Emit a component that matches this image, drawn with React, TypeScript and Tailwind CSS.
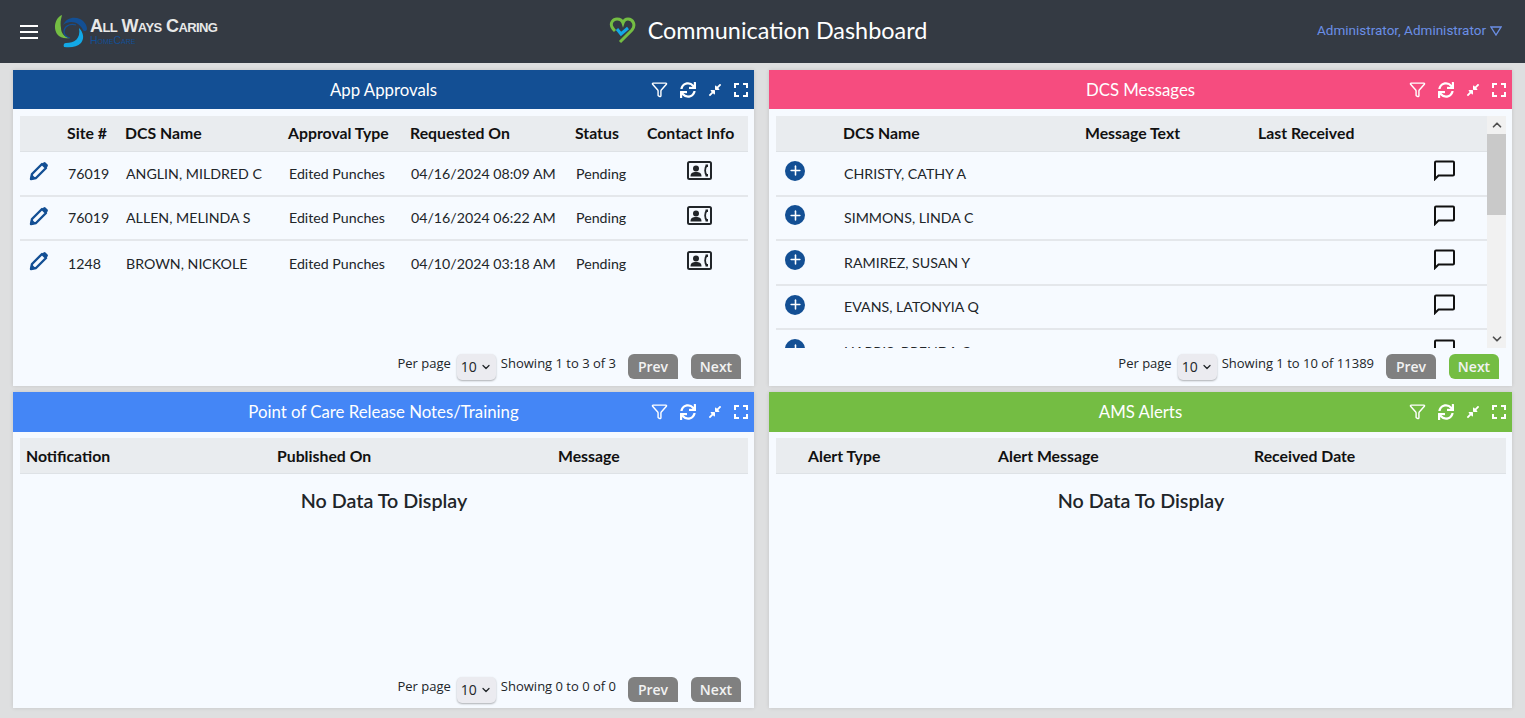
import { ReactNode } from 'react'
import { ChevronDown, ChevronUp, Filter, Plus } from 'lucide-react'
import { FaCompressAlt, FaSync } from 'react-icons/fa'

const FONT = "font-['Lato','Noto_Sans',sans-serif]"
const UI_FONT = "font-['Open_Sans',sans-serif]"

const approvals = [
    ['76019', 'ANGLIN, MILDRED C', 'Edited Punches', '04/16/2024 08:09 AM', 'Pending'],
    ['76019', 'ALLEN, MELINDA S', 'Edited Punches', '04/16/2024 06:22 AM', 'Pending'],
    ['1248', 'BROWN, NICKOLE', 'Edited Punches', '04/10/2024 03:18 AM', 'Pending'],
]

const messages = ['CHRISTY, CATHY A', 'SIMMONS, LINDA C', 'RAMIREZ, SUSAN Y', 'EVANS, LATONYIA Q', 'HARRIS, BRENDA C']

function ExpandIcon() {
    return (
        <svg className="ml-[12px]" width="14" height="14" viewBox="0 0 14 14" fill="none" stroke="white" strokeWidth="2">
            <path d="M1 5V1h4M9 1h4v4M13 9v4H9M5 13H1V9" />
        </svg>
    )
}

function PencilIcon() {
    return (
        <svg className="mb-[4px] ml-[9px]" width="20" height="20" viewBox="0 0 20 20" fill="none">
            <path d="M2 18l1-5L13 3l4 4L7 17z" stroke="#134f94" strokeWidth="2.400" strokeLinejoin="round" />
            <path d="M1 19l1.500-6 4.500 4.500z" fill="#134f94" />
            <path d="M14.500 1.500a1.500 1.500 0 0 1 2 0l2 2a1.500 1.500 0 0 1 0 2L17 7l-4-4z" fill="#134f94" />
        </svg>
    )
}

function ContactIcon() {
    return (
        <svg width="25" height="19" viewBox="0 0 25 19" fill="none">
            <rect x="1" y="1" width="23" height="17" rx="1.500" stroke="#212529" strokeWidth="2" />
            <circle cx="9" cy="7.500" r="3" fill="#212529" />
            <path d="M3.500 15.500c0-3.500 2-4.500 5.500-4.500s5.500 1 5.500 4.500z" fill="#212529" />
            <path d="M20 4.500c-2.500 2-2.500 8 0 10" stroke="#212529" strokeWidth="1.800" />
            <path d="M18.500 3.500h2.500v2.500h-2.500zM18.500 13h2.500v2.500h-2.500z" fill="#212529" />
        </svg>
    )
}

function CommentIcon() {
    return (
        <svg width="22" height="21" viewBox="0 0 22 21" fill="none" stroke="#111" strokeWidth="2">
            <path d="M2 19V2.500c0-.6.400-1 1-1h17c.6 0 1 .400 1 1v12c0 .6-.400 1-1 1H5.500z" />
        </svg>
    )
}

function PlusBadge() {
    return (
        <span className="flex h-5 w-5 items-center justify-center rounded-full bg-[#134f94]">
            <Plus size={15} color="white" strokeWidth={2.5} />
        </span>
    )
}

function Panel({ title, color, tall, children }: { title: string; color: string; tall?: boolean; children: ReactNode }) {
    return (
        <section className="flex h-[316px] flex-col bg-[#f6faff] shadow-[0_0_4px_rgba(0,0,0,0.12)]">
            <div className={`relative flex shrink-0 items-center justify-center text-[16.800px] text-white ${tall ? 'h-[40px]' : 'h-[39px]'} ${color}`}>
                <span>{title}</span>
                <div className="absolute right-[6px] top-[11px] flex items-center">
                    <Filter size={17} strokeWidth={2} />
                    <FaSync className="ml-[12px]" size={16} />
                    <FaCompressAlt className="ml-[12px]" size={14} />
                    <ExpandIcon />
                </div>
            </div>
            {children}
        </section>
    )
}

function Pager({ showing, nextColor = 'bg-[#808080]' }: { showing: string; nextColor?: string }) {
    return (
        <div className={`mr-[13px] flex h-[37px] items-center justify-end text-[13px] text-[#212529] ${UI_FONT}`}>
            <span className="mb-[5px]">Per page</span>
            <span className="ml-[6px] flex h-[26px] w-[39px] items-center justify-center gap-[3px] rounded-[5px] bg-[#ebebf0] text-[14px] shadow-[0_1px_2px_rgba(0,0,0,0.3)]">
                10 <ChevronDown size={12} strokeWidth={2.5} />
            </span>
            <span className="mb-[5px] ml-[5px]">{showing}</span>
            <span className="ml-[12px] flex h-[25px] w-[50px] items-center justify-center rounded-tl-[6px] rounded-tr-[6px] rounded-bl-[6px] bg-[#808080] text-[14px] font-semibold text-[#f2f2f2]">Prev</span>
            <span className={`ml-[13px] flex h-[25px] w-[50px] items-center justify-center rounded-tl-[6px] rounded-tr-[6px] rounded-bl-[6px] text-[14px] font-semibold text-[#f2f2f2] ${nextColor}`}>Next</span>
        </div>
    )
}

function HeaderRow({ cols, children }: { cols: string; children: ReactNode }) {
    return (
        <div className={`grid h-[36px] items-center border-b border-[#dee2e6] bg-[#e9ecef] text-[15.800px] font-bold text-[#111] ${cols}`}>
            {children}
        </div>
    )
}

function NoData() {
    return <div className="pt-[12px] text-center text-[19.700px] font-semibold text-[#212529]">No Data To Display</div>
}

export default function App() {
    return (
        <div className={`flex h-[718px] flex-col overflow-hidden bg-[#dedfe0] ${FONT}`}>
            <header className="flex h-[63px] shrink-0 items-center justify-between bg-[#343a43] pl-[20px] pr-[23px]">
                <div className="flex w-[414px] items-center">
                    <div className="flex w-[18px] flex-col gap-[4px]">
                        <span className="h-[2px] bg-white" />
                        <span className="h-[2px] bg-white" />
                        <span className="h-[2px] bg-white" />
                    </div>
                    <svg className="ml-[16px]" width="34" height="34" viewBox="0 0 34 34" fill="none">
                        <path d="M8 0C1 3-1 13 3 19c3 4 8 5 13 4-6-1-9-5-9-10-1-5 0-9 1-13z" fill="#74bd43" />
                        <path d="M9 10c3-7 11-9 17-6 4 2 7 6 7 10 0 2-3 3-4 1C26 8 17 4 9 10z" fill="#134f94" />
                        <path d="M25 13c4 4 6 10 2 15-4 4-10 5-17 4-1-2 0-4 2-4 8 0 15-4 13-15z" fill="#12a8e6" />
                        <path d="M22 10c-7-2-12 2-12 7 0 3 2 5 6 6" stroke="#134f94" strokeWidth="1.200" />
                    </svg>
                    <div className="ml-[2px] flex flex-col leading-none">
                        <span className="font-['Liberation_Sans',sans-serif] text-[18px] font-bold leading-[17px] tracking-[-0.6px] text-[#e8e8e8] [font-variant:small-caps]">All Ways Caring</span>
                        <span className="font-['Liberation_Sans',sans-serif] text-[10.500px] leading-[10px] text-[#134f94] [font-variant:small-caps]">HomeCare</span>
                    </div>
                </div>
                <div className="flex items-center pb-[2px]">
                    <svg width="28" height="27" viewBox="0 0 28 27" fill="none">
                        <path d="M11 25 L23 13c4-5 1-11-4-11-2 0-4 1-5 4-1-3-3-4-6-4C4 2 1 6 3 10c1 2 2 3 3 4" stroke="#74bd43" strokeWidth="3" />
                        <path d="M8 12l4 5 7-6" stroke="#12a8e6" strokeWidth="3" />
                    </svg>
                    <h1 className="ml-[11px] text-[23.400px] font-normal text-white">Communication Dashboard</h1>
                </div>
                <div className="flex w-[400px] items-center justify-end pb-[2px] font-['Roboto',sans-serif] text-[13.500px] text-[#6b8fe6]">
                    Administrator, Administrator
                    <svg className="ml-[4px]" width="12" height="10" viewBox="0 0 12 10" fill="none" stroke="#6b8fe6" strokeWidth="1.3">
                        <path d="M1 1h10L6 9z" />
                    </svg>
                </div>
            </header>

            <main className="grid grid-cols-[741px_743px] grid-rows-[316px_316px] gap-x-[15px] gap-y-[6px] pl-[13px] pt-[7px]">
                <Panel title="App Approvals" color="bg-[#134f94]">
                    <div className="ml-[7px] mr-[6px] mt-[7px] h-[232px] overflow-hidden">
                        <HeaderRow cols="grid-cols-[47px_58px_163px_122px_165px_72px_1fr] pb-[2px]">
                            <span />
                            <span>Site #</span>
                            <span>DCS Name</span>
                            <span>Approval Type</span>
                            <span>Requested On</span>
                            <span>Status</span>
                            <span>Contact Info</span>
                        </HeaderRow>
                        {approvals.map(row => (
                            <div key={row[1]} className="grid h-[44.600px] grid-cols-[48px_58px_163px_122px_165px_72px_100px] items-center border-b-2 border-[#e4e7eb] text-[14.200px] text-[#212529] last:border-b-0">
                                <PencilIcon />
                                <span>{row[0]}</span>
                                <span>{row[1]}</span>
                                <span>{row[2]}</span>
                                <span>{row[3]}</span>
                                <span>{row[4]}</span>
                                <span className="flex justify-center pb-[5px] pl-[3px]"><ContactIcon /></span>
                            </div>
                        ))}
                    </div>
                    <Pager showing="Showing 1 to 3 of 3" />
                </Panel>

                <Panel title="DCS Messages" color="bg-[#f64c7f]">
                    <div className="ml-[7px] mr-[6px] mt-[7px] flex h-[232px]">
                        <div className="min-w-0 flex-1 overflow-hidden">
                            <HeaderRow cols="grid-cols-[67px_242px_173px_229px] pb-[2px]">
                                <span />
                                <span>DCS Name</span>
                                <span>Message Text</span>
                                <span>Last Received</span>
                            </HeaderRow>
                            {messages.map(name => (
                                <div key={name} className="grid h-[44.600px] grid-cols-[68px_589px_54px] items-center border-b-2 border-[#e4e7eb] text-[14.200px] text-[#212529]">
                                    <span className="ml-[9px] pb-[5px]"><PlusBadge /></span>
                                    <span>{name}</span>
                                    <span className="pb-[5px]"><CommentIcon /></span>
                                </div>
                            ))}
                        </div>
                        <div className="flex w-[19px] shrink-0 flex-col bg-[#f1f1f1]">
                            <span className="flex h-[18px] items-center justify-center"><ChevronUp size={14} color="#505050" strokeWidth={3} /></span>
                            <span className="h-[81px] bg-[#c9c9c9]" />
                            <span className="flex-1" />
                            <span className="flex h-[18px] items-center justify-center"><ChevronDown size={14} color="#505050" strokeWidth={3} /></span>
                        </div>
                    </div>
                    <Pager showing="Showing 1 to 10 of 11389" nextColor="bg-[#74bd43]" />
                </Panel>

                <Panel title="Point of Care Release Notes/Training" color="bg-[#4486f6]" tall>
                    <div className="ml-[7px] mr-[6px] mt-[6px] h-[233px]">
                        <HeaderRow cols="grid-cols-[251px_281px_1fr] pl-[6px]">
                            <span>Notification</span>
                            <span>Published On</span>
                            <span>Message</span>
                        </HeaderRow>
                        <NoData />
                    </div>
                    <Pager showing="Showing 0 to 0 of 0" />
                </Panel>

                <Panel title="AMS Alerts" color="bg-[#74bd43]" tall>
                    <div className="ml-[7px] mr-[6px] mt-[6px] h-[233px]">
                        <HeaderRow cols="grid-cols-[190px_256px_1fr] pl-[32px]">
                            <span>Alert Type</span>
                            <span>Alert Message</span>
                            <span>Received Date</span>
                        </HeaderRow>
                        <NoData />
                    </div>
                </Panel>
            </main>
        </div>
    )
}
